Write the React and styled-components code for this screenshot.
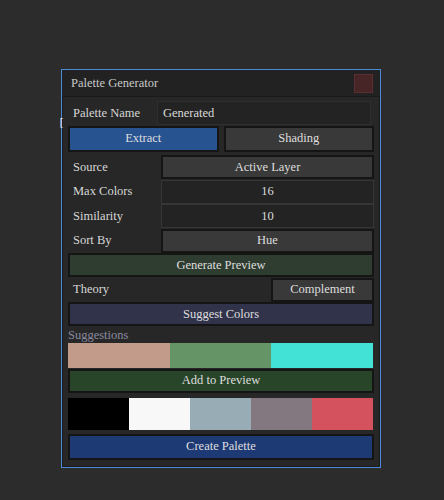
import React from "react";
import styled, { createGlobalStyle } from "styled-components";

const GlobalStyle = createGlobalStyle`
  body {
    margin: 0;
    background: #2c2c2c;
    font-family: "Liberation Serif", "DejaVu Serif", serif;
  }
`;

const suggestions = ["#c29b8b", "#659567", "#42e3d6"];
const preview = ["#000000", "#f8f8f8", "#97acb4", "#837880", "#d3525d"];

const App = () => {
  return (
    <Page>
      <GlobalStyle />
      <Caret>[</Caret>
      <Window>
        <TitleBar>
          <Title>Palette Generator</Title>
          <CloseButton />
        </TitleBar>
        <Body>
          <Row>
            <Label>Palette Name</Label>
            <NameInput>Generated</NameInput>
          </Row>
          <TabRow>
            <Button $variant="blue" $tall>Extract</Button>
            <Button $tall>Shading</Button>
          </TabRow>
          <Row>
            <Label>Source</Label>
            <Value>
              <Button>Active Layer</Button>
            </Value>
          </Row>
          <Row>
            <Label>Max Colors</Label>
            <Value>
              <Field>16</Field>
            </Value>
          </Row>
          <Row>
            <Label>Similarity</Label>
            <Value>
              <Field>10</Field>
            </Value>
          </Row>
          <Row>
            <Label>Sort By</Label>
            <Value>
              <Button>Hue</Button>
            </Value>
          </Row>
          <Button $variant="green">Generate Preview</Button>
          <Row>
            <Label>Theory</Label>
            <ShortValue>
              <Button>Complement</Button>
            </ShortValue>
          </Row>
          <Button $variant="navy">Suggest Colors</Button>
          <SectionLabel>Suggestions</SectionLabel>
          <SwatchStrip $height={25}>
            {suggestions.map((c) => (
              <Swatch key={c} style={{ background: c }} />
            ))}
          </SwatchStrip>
          <Button $variant="forest">Add to Preview</Button>
          <SwatchStrip $height={32} $gap={5}>
            {preview.map((c) => (
              <Swatch key={c} style={{ background: c }} />
            ))}
          </SwatchStrip>
          <Button $variant="royal" $tall>
            Create Palette
          </Button>
        </Body>
      </Window>
    </Page>
  );
};

const Page = styled.div`
  position: relative;
  padding: 69px 0 0 61px;
  height: 431px;
`;

const Caret = styled.span`
  position: absolute;
  left: 58px;
  top: 116px;
  font-family: "DejaVu Sans Mono", monospace;
  font-size: 11px;
  color: #e0e0e0;
`;

const Window = styled.div`
  width: 318px;
  border: 1px solid #4a8ad8;
  box-shadow: inset 0 0 0 1px #1b1b1b;
  background: #272727;
`;

const TitleBar = styled.div`
  display: flex;
  align-items: center;
  justify-content: space-between;
  height: 26px;
  padding: 0 7px 0 9px;
  background: #222222;
  border-bottom: 1px solid #1a1a1a;
`;

const Title = styled.span`
  color: #c8c8c8;
  font-size: 12.5px;
`;

const CloseButton = styled.div`
  width: 17px;
  height: 17px;
  background: #472426;
  border: 1px solid #5a2f31;
`;

const Body = styled.div`
  display: flex;
  flex-direction: column;
  gap: 0.5px;
  padding: 4px 6px 7px 6px;
`;

const Row = styled.div`
  display: flex;
  align-items: center;
  height: 24px;
  flex: none;
`;

const TabRow = styled.div`
  display: grid;
  grid-template-columns: 1fr 1fr;
  gap: 5px;
  margin-bottom: 3px;
`;

const Label = styled.span`
  box-sizing: border-box;
  flex: 0 0 93px;
  padding-left: 5px;
  color: #d6d6d6;
  font-size: 12.5px;
`;

const Value = styled.div`
  flex: 1;
  display: flex;
  height: 100%;
`;

const ShortValue = styled.div`
  margin-left: auto;
  width: 103px;
  display: flex;
  height: 100%;
`;

const NameInput = styled.div`
  flex: 1;
  margin-left: -4px;
  margin-right: 3px;
  height: 22px;
  display: flex;
  align-items: center;
  padding-left: 5px;
  background: #232323;
  border: 1px solid #2f2f2f;
  color: #dadada;
  font-size: 12.5px;
`;

const Field = styled.div`
  flex: 1;
  display: flex;
  align-items: center;
  justify-content: center;
  background: #232323;
  border: 1px solid #363636;
  color: #dcdcdc;
  font-size: 12.5px;
`;

const variants = {
  default: "#393939",
  blue: "#285391",
  green: "#2f3d31",
  navy: "#31334b",
  forest: "#28452a",
  royal: "#1e3a75",
};

const Button = styled.div`
  flex: 1 1 auto;
  box-sizing: border-box;
  height: ${(p) => (p.$tall ? "26px" : "24px")};
  display: flex;
  align-items: center;
  justify-content: center;
  background: ${(p) => variants[p.$variant || "default"]};
  border: 2px solid #151515;
  color: #dedede;
  font-size: 12.5px;
`;

const SectionLabel = styled.div`
  padding-top: 1px;
  color: #8a8aa0;
  font-size: 12.5px;
  line-height: 15px;
`;

const SwatchStrip = styled.div`
  display: flex;
  flex: none;
  height: ${(p) => p.$height}px;
  margin: ${(p) => (p.$gap ? `${p.$gap}px 1px 3px 0` : "0 1px 0 0")};
`;

const Swatch = styled.div`
  flex: 1;
`;

export default App;
